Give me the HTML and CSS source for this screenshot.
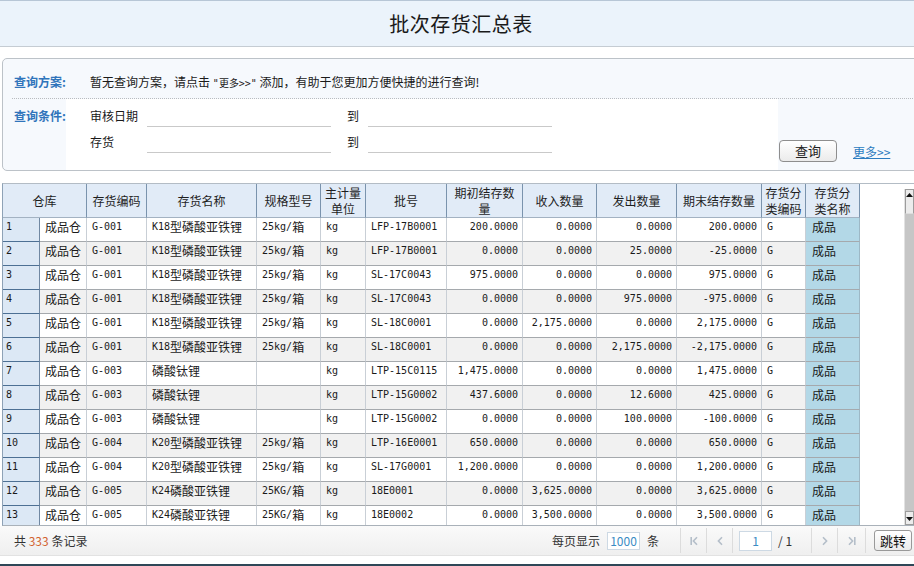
FILE: index.html
```html
<!DOCTYPE html>
<html lang="zh-CN">
<head>
<meta charset="utf-8">
<title>批次存货汇总表</title>
<link rel="stylesheet" href="styles.css">
</head>
<body>
<div class="page">
  <header class="title-bar"><h1>批次存货汇总表</h1></header>

  <section class="query">
    <div class="plan-row">
      <span class="q-label">查询方案:</span>
      <span class="plan-text">暂无查询方案，请点击 <span class="asc">"更多&gt;&gt;"</span> 添加，有助于您更加方便快捷的进行查询!</span>
    </div>
    <div class="cond-row">
      <span class="q-label cond-label">查询条件:</span>
      <div class="cond-fields">
        <span class="f-label">审核日期</span>
        <input class="f-input" type="text">
        <span class="f-to">到</span>
        <input class="f-input" type="text">
        <span class="f-label">存货</span>
        <input class="f-input" type="text">
        <span class="f-to">到</span>
        <input class="f-input" type="text">
      </div>
      <div class="cond-actions">
        <button class="btn-query" type="button">查询</button>
        <a class="more-link" href="#">更多&gt;&gt;</a>
      </div>
    </div>
  </section>

  <section class="grid-wrap">
    <div class="grid-clip">
      <table class="grid">
        <colgroup>
          <col class="c-rn"><col class="c-wh"><col class="c-code"><col class="c-name"><col class="c-spec"><col class="c-unit"><col class="c-batch"><col class="c-q1"><col class="c-q2"><col class="c-q3"><col class="c-q4"><col class="c-cc"><col class="c-cn">
        </colgroup>
        <thead>
          <tr>
            <th colspan="2">仓库</th>
            <th>存货编码</th>
            <th>存货名称</th>
            <th>规格型号</th>
            <th>主计量<br>单位</th>
            <th>批号</th>
            <th>期初结存数<br>量</th>
            <th>收入数量</th>
            <th>发出数量</th>
            <th>期末结存数量</th>
            <th>存货分<br>类编码</th>
            <th>存货分<br>类名称</th>
          </tr>
        </thead>
        <tbody>
          <tr><td class="rn">1</td><td class="wh">成品仓</td><td>G-001</td><td>K18<span class="zh">型磷酸亚铁锂</span></td><td>25kg/<span class="zh">箱</span></td><td>kg</td><td>LFP-17B0001</td><td class="n">200.0000</td><td class="n">0.0000</td><td class="n">0.0000</td><td class="n">200.0000</td><td>G</td><td class="cat">成品</td></tr>
          <tr><td class="rn">2</td><td class="wh">成品仓</td><td>G-001</td><td>K18<span class="zh">型磷酸亚铁锂</span></td><td>25kg/<span class="zh">箱</span></td><td>kg</td><td>LFP-17B0001</td><td class="n">0.0000</td><td class="n">0.0000</td><td class="n">25.0000</td><td class="n">-25.0000</td><td>G</td><td class="cat">成品</td></tr>
          <tr><td class="rn">3</td><td class="wh">成品仓</td><td>G-001</td><td>K18<span class="zh">型磷酸亚铁锂</span></td><td>25kg/<span class="zh">箱</span></td><td>kg</td><td>SL-17C0043</td><td class="n">975.0000</td><td class="n">0.0000</td><td class="n">0.0000</td><td class="n">975.0000</td><td>G</td><td class="cat">成品</td></tr>
          <tr><td class="rn">4</td><td class="wh">成品仓</td><td>G-001</td><td>K18<span class="zh">型磷酸亚铁锂</span></td><td>25kg/<span class="zh">箱</span></td><td>kg</td><td>SL-17C0043</td><td class="n">0.0000</td><td class="n">0.0000</td><td class="n">975.0000</td><td class="n">-975.0000</td><td>G</td><td class="cat">成品</td></tr>
          <tr><td class="rn">5</td><td class="wh">成品仓</td><td>G-001</td><td>K18<span class="zh">型磷酸亚铁锂</span></td><td>25kg/<span class="zh">箱</span></td><td>kg</td><td>SL-18C0001</td><td class="n">0.0000</td><td class="n">2,175.0000</td><td class="n">0.0000</td><td class="n">2,175.0000</td><td>G</td><td class="cat">成品</td></tr>
          <tr><td class="rn">6</td><td class="wh">成品仓</td><td>G-001</td><td>K18<span class="zh">型磷酸亚铁锂</span></td><td>25kg/<span class="zh">箱</span></td><td>kg</td><td>SL-18C0001</td><td class="n">0.0000</td><td class="n">0.0000</td><td class="n">2,175.0000</td><td class="n">-2,175.0000</td><td>G</td><td class="cat">成品</td></tr>
          <tr><td class="rn">7</td><td class="wh">成品仓</td><td>G-003</td><td><span class="zh">磷酸钛锂</span></td><td></td><td>kg</td><td>LTP-15C0115</td><td class="n">1,475.0000</td><td class="n">0.0000</td><td class="n">0.0000</td><td class="n">1,475.0000</td><td>G</td><td class="cat">成品</td></tr>
          <tr><td class="rn">8</td><td class="wh">成品仓</td><td>G-003</td><td><span class="zh">磷酸钛锂</span></td><td></td><td>kg</td><td>LTP-15G0002</td><td class="n">437.6000</td><td class="n">0.0000</td><td class="n">12.6000</td><td class="n">425.0000</td><td>G</td><td class="cat">成品</td></tr>
          <tr><td class="rn">9</td><td class="wh">成品仓</td><td>G-003</td><td><span class="zh">磷酸钛锂</span></td><td></td><td>kg</td><td>LTP-15G0002</td><td class="n">0.0000</td><td class="n">0.0000</td><td class="n">100.0000</td><td class="n">-100.0000</td><td>G</td><td class="cat">成品</td></tr>
          <tr><td class="rn">10</td><td class="wh">成品仓</td><td>G-004</td><td>K20<span class="zh">型磷酸亚铁锂</span></td><td>25kg/<span class="zh">箱</span></td><td>kg</td><td>LTP-16E0001</td><td class="n">650.0000</td><td class="n">0.0000</td><td class="n">0.0000</td><td class="n">650.0000</td><td>G</td><td class="cat">成品</td></tr>
          <tr><td class="rn">11</td><td class="wh">成品仓</td><td>G-004</td><td>K20<span class="zh">型磷酸亚铁锂</span></td><td>25kg/<span class="zh">箱</span></td><td>kg</td><td>SL-17G0001</td><td class="n">1,200.0000</td><td class="n">0.0000</td><td class="n">0.0000</td><td class="n">1,200.0000</td><td>G</td><td class="cat">成品</td></tr>
          <tr><td class="rn">12</td><td class="wh">成品仓</td><td>G-005</td><td>K24<span class="zh">磷酸亚铁锂</span></td><td>25KG/<span class="zh">箱</span></td><td>kg</td><td>18E0001</td><td class="n">0.0000</td><td class="n">3,625.0000</td><td class="n">0.0000</td><td class="n">3,625.0000</td><td>G</td><td class="cat">成品</td></tr>
          <tr><td class="rn">13</td><td class="wh">成品仓</td><td>G-005</td><td>K24<span class="zh">磷酸亚铁锂</span></td><td>25KG/<span class="zh">箱</span></td><td>kg</td><td>18E0002</td><td class="n">0.0000</td><td class="n">3,500.0000</td><td class="n">0.0000</td><td class="n">3,500.0000</td><td>G</td><td class="cat">成品</td></tr>
        </tbody>
      </table>
    </div>
    <div class="vscroll">
      <div class="sb-btn sb-up"><svg width="7" height="4" viewBox="0 0 7 4"><path d="M0 4L3.5 0L7 4Z" fill="#111"/></svg></div>
      <div class="sb-track"></div>
      <div class="sb-btn sb-down"><svg width="7" height="4" viewBox="0 0 7 4"><path d="M0 0L3.5 4L7 0Z" fill="#111"/></svg></div>
    </div>
  </section>

  <footer class="pager-bar">
    <span class="total">共 <em>333</em> 条记录</span>
    <div class="pager">
      <span class="pp-label">每页显示</span>
      <input class="pp-input" type="text" value="1000">
      <span class="pp-unit">条</span>
      <span class="sep"></span>
      <span class="pg-btn"><svg width="8" height="10" viewBox="0 0 8 10"><path d="M1.2 1v8M7 1.2L3.4 5L7 8.8" fill="none" stroke="#b4bec9" stroke-width="1.6"/></svg></span>
      <span class="sep"></span>
      <span class="pg-btn"><svg width="6" height="10" viewBox="0 0 6 10"><path d="M5 1.2L1.4 5L5 8.8" fill="none" stroke="#b4bec9" stroke-width="1.6"/></svg></span>
      <span class="sep"></span>
      <input class="pg-input" type="text" value="1">
      <span class="pg-total">/ 1</span>
      <span class="sep"></span>
      <span class="pg-btn"><svg width="6" height="10" viewBox="0 0 6 10"><path d="M1 1.2L4.6 5L1 8.8" fill="none" stroke="#b4bec9" stroke-width="1.6"/></svg></span>
      <span class="sep"></span>
      <span class="pg-btn pg-last"><svg width="8" height="10" viewBox="0 0 8 10"><path d="M6.8 1v8M1 1.2L4.6 5L1 8.8" fill="none" stroke="#b4bec9" stroke-width="1.6"/></svg></span>
      <span class="sep"></span>
      <button class="btn-jump" type="button">跳转</button>
    </div>
  </footer>
  <div class="bottom-line"></div>
</div>
</body>
</html>
```

FILE: styles.css
```css
* { box-sizing: border-box; }
html, body { margin: 0; padding: 0; }
body {
  width: 914px;
  height: 566px;
  overflow: hidden;
  background: #fff;
  font-family: "Noto Sans CJK SC", "Noto Sans", sans-serif;
  font-size: 12px;
  color: #222;
}
.page {
  display: flex;
  flex-direction: column;
  height: 566px;
  overflow: hidden;
}

/* title */
.title-bar {
  flex: none;
  height: 47px;
  border-top: 1px solid #b7c6d6;
  border-bottom: 1px solid #c5ccd3;
  background: #ebf3fb;
  display: flex;
  align-items: center;
  justify-content: center;
}
.title-bar h1 {
  margin: 0 0 0 8px;
  font-size: 20px;
  font-weight: normal;
  color: #1a1a1a;
  line-height: 24px;
  letter-spacing: 0.5px;
}

/* query panel */
.query {
  flex: none;
  height: 113px;
  margin: 11px -24px 0 2px;
  border: 1px solid #bcc2c8;
  border-radius: 5px;
  background: #f6f9fd;
  display: flex;
  flex-direction: column;
}
.plan-row {
  height: 40px;
  margin-left: 9px;
  padding: 15px 0 0 2px;
  border-bottom: 1px dotted #b9bcc0;
  display: flex;
  line-height: 16px;
}
.q-label {
  color: #2f74bb;
  font-weight: bold;
  flex: none;
  white-space: nowrap;
}
.plan-row .q-label { width: 76px; }
.plan-text { color: #1a1a1a; white-space: nowrap; }
.plan-text .asc { font-family: "DejaVu Sans Mono", monospace; font-size: 10px; }
.cond-row {
  flex: 1;
  display: flex;
}
.cond-label {
  width: 63px;
  padding: 7px 0 0 11px;
  line-height: 20px;
}
.cond-fields {
  flex: none;
  width: 712px;
  background: #fff;
  padding: 7px 0 0 24px;
  display: grid;
  grid-template-columns: 57px 184px 37px 184px;
  grid-auto-rows: 20px;
  row-gap: 6px;
  align-content: start;
}
.f-label, .f-to {
  line-height: 20px;
  color: #1a1a1a;
}
.f-to { padding-left: 16px; }
.f-input {
  width: 184px;
  height: 20px;
  margin: 1px 0 0;
  padding: 0;
  border: 0;
  border-bottom: 1px solid #c9c9c9;
  background: transparent;
  font: inherit;
}
.cond-actions {
  flex: 1;
  display: flex;
  align-items: flex-end;
  padding: 0 0 8px 1px;
}
.btn-query {
  width: 58px;
  height: 22px;
  padding: 0;
  border: 1px solid #8e8e8e;
  border-radius: 4px;
  background: linear-gradient(#ffffff, #ebebeb);
  font-family: "Noto Sans CJK SC", sans-serif;
  font-size: 13px;
  color: #222;
  line-height: 20px;
}
.more-link {
  margin-left: 16px;
  line-height: 20px;
  color: #2c7cc0;
  text-decoration: underline;
}

/* grid */
.grid-wrap {
  flex: none;
  height: 343px;
  margin: 12px 0 0 2px;
  border-top: 1px solid #b3bcc5;
  border-left: 1px solid #8ea2b6;
  border-bottom: 1px solid #a9b1b9;
  display: flex;
}
.grid-clip {
  flex: 1;
  overflow: hidden;
}
.grid {
  table-layout: fixed;
  border-collapse: separate;
  border-spacing: 0;
  width: 857px;
}
.c-rn { width: 37px; }
.c-wh { width: 47px; }
.c-code { width: 60px; }
.c-name { width: 110px; }
.c-spec { width: 64px; }
.c-unit { width: 45px; }
.c-batch { width: 81px; }
.c-q1 { width: 76px; }
.c-q2 { width: 74px; }
.c-q3 { width: 80px; }
.c-q4 { width: 85px; }
.c-cc { width: 44px; }
.c-cn { width: 54px; }

.grid thead tr { height: 34px; }
.grid th {
  font-family: "Noto Sans CJK SC", sans-serif;
  font-size: 12px;
  font-weight: normal;
  line-height: 16px;
  color: #1e1e1e;
  background: #e1ebf7;
  border-right: 1px solid #7a93ad;
  border-bottom: 1px solid #a3b2c2;
  padding: 0 2px;
  text-align: center;
  vertical-align: middle;
  white-space: nowrap;
}
.grid td {
  font-family: "DejaVu Sans Mono", "Liberation Mono", monospace;
  font-size: 10px;
  line-height: 18px;
  color: #1a1a1a;
  padding: 0 4px 5px 5px;
  vertical-align: top;
  white-space: nowrap;
  overflow: hidden;
  background: #fff;
  border-right: 1px solid #c9cfd6;
  border-bottom: 1px solid #a5a9ad;
}
.grid tbody tr:nth-child(even) td { background: #f1f1f1; }
.grid .zh {
  font-family: "Noto Sans CJK SC", sans-serif;
  font-size: 12px;
  line-height: 18px;
  vertical-align: top;
}
.grid td.rn,
.grid tbody tr:nth-child(even) td.rn {
  background: #dce8f5;
  border-bottom-color: #4d7094;
  border-right-color: #7088a2;
  padding-left: 3px;
}
.grid td.wh {
  font-family: "Noto Sans CJK SC", sans-serif;
  font-size: 12px;
  text-align: center;
  padding: 0 2px 5px;
}
.grid td.n { text-align: right; padding-right: 4px; }
.grid td.cat,
.grid tbody tr:nth-child(even) td.cat {
  font-family: "Noto Sans CJK SC", sans-serif;
  font-size: 12px;
  background: #b3d8e7;
  border-right-color: #9db8c6;
  padding-left: 6px;
}

/* fake scrollbar */
.vscroll {
  flex: none;
  width: 10px;
  margin-top: 5px;
  background: #c6c6c6;
  border-left: 1px solid #e2e2e2;
  display: flex;
  flex-direction: column;
}
.sb-btn {
  height: 16px;
  flex: none;
  background: #ececec;
  border: 1px solid #9c9c9c;
  display: flex;
  justify-content: center;
}
.sb-up { align-items: flex-start; padding-top: 3px; height: 25px; border-bottom-color: #dedede; }
.sb-down { align-items: flex-end; padding-bottom: 3px; height: 14px; }
.sb-track { flex: 1; }

/* footer / pager */
.pager-bar {
  flex: none;
  height: 30px;
  background: linear-gradient(#fafafa, #efefef);
  border-bottom: 1px solid #e2e2e2;
  display: flex;
  align-items: center;
  padding-left: 14px;
}
.total { color: #333; }
.total em { font-style: normal; color: #d2622f; }
.pager {
  margin-left: auto;
  margin-right: 2px;
  height: 100%;
  display: flex;
  align-items: center;
  color: #333;
}
.pp-input, .pg-input {
  width: 33px;
  height: 18px;
  padding: 0;
  border: 1px solid #cdd9e4;
  background: #fff;
  text-align: center;
  font-family: "Noto Sans CJK SC", sans-serif;
  font-size: 12px;
  color: #3a8cc4;
}
.pp-input { margin-left: 7px; }
.pp-unit { margin-left: 7px; }
.sep {
  width: 1px;
  height: 25px;
  background: #dcdcdc;
}
.pp-unit + .sep { margin-left: 21px; }
.pg-btn {
  width: 25px;
  display: flex;
  justify-content: center;
  align-items: center;
}
.pg-last { width: 27px; }
.pg-input { margin-left: 6px; height: 20px; }
.pg-total { margin-left: 6px; width: 33px; }
.btn-jump {
  margin-left: 8px;
  width: 38px;
  height: 21px;
  padding: 0;
  border: 1px solid #999;
  border-radius: 3px;
  background: linear-gradient(#ffffff, #ebebeb);
  font-family: "Noto Sans CJK SC", sans-serif;
  font-size: 13px;
  color: #111;
  line-height: 19px;
}
.bottom-line {
  flex: none;
  height: 3px;
  margin-top: 8px;
  background: #2e4757;
}
```
